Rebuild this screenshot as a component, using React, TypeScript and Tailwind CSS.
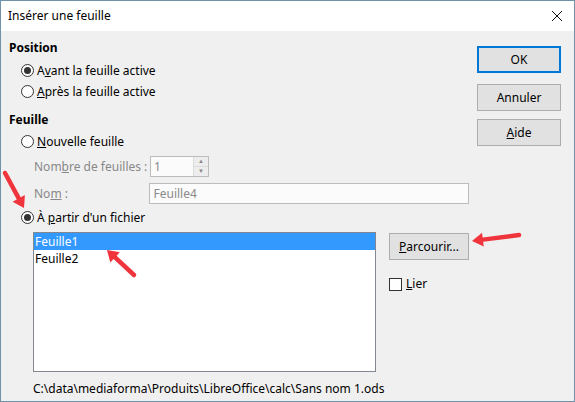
import React from "react"

const font = { fontFamily: '"Noto Sans", "Open Sans", sans-serif' }

const Radio = ({ checked, label, u, rest, disabled }: { checked?: boolean; label: string; u: string; rest: string; disabled?: boolean }) => (
    <div className="flex items-center h-[21px]">
        <span className="w-[13px] h-[13px] rounded-full border border-[#333] bg-white flex items-center justify-center">
            {checked && <span className="w-[7px] h-[7px] rounded-full bg-[#333]" />}
        </span>
        <span className={`ml-[3px] ${disabled ? "text-[#6d6d6d]" : "text-black"}`}>
            {label}<span className="underline">{u}</span>{rest}
        </span>
    </div>
)

const Btn = ({ children, primary, className = "" }: { children: React.ReactNode; primary?: boolean; className?: string }) => (
    <div className={`h-[27px] flex items-center justify-center bg-[#e1e1e1] border ${primary ? "border-[#0078d7] border-2" : "border-[#adadad]"} ${className}`}>
        {children}
    </div>
)

const Arrow = ({ x1, y1, x2, y2 }: { x1: number; y1: number; x2: number; y2: number }) => {
    const a = Math.atan2(y2 - y1, x2 - x1)
    const len = 11
    const w = 7
    const bx = x2 - Math.cos(a) * len
    const by = y2 - Math.sin(a) * len
    const px = -Math.sin(a) * w
    const py = Math.cos(a) * w
    return (
        <g>
            <line x1={x1} y1={y1} x2={bx} y2={by} stroke="#f0343c" strokeWidth={4.5} strokeLinecap="round" />
            <polygon points={`${x2},${y2} ${bx + px},${by + py} ${bx - px},${by - py}`} fill="#f0343c" />
        </g>
    )
}

export default function App() {
    return (
        <div className="w-[575px] h-[402px] relative text-[12px] text-black overflow-hidden" style={font}>
            <div className="w-full h-full border border-[#6f92ab] flex flex-col bg-[#f0f0f0]">
                {/* title bar */}
                <div className="h-[30px] bg-white flex items-center justify-between pl-[7px] pr-[11px] shrink-0">
                    <span className="text-[12px]">Insérer une feuille</span>
                    <svg width="12" height="12" viewBox="0 0 12 12">
                        <path d="M1 1 L11 11 M11 1 L1 11" stroke="#111" strokeWidth="1" />
                    </svg>
                </div>

                <div className="flex flex-1">
                    {/* left column */}
                    <div className="w-[468px] pl-[8px] pt-[8px] flex flex-col">
                        <div className="font-bold h-[18px] leading-[18px]">Position</div>
                        <div className="pl-[12px] pt-[3px]">
                            <Radio checked label="A" u="v" rest="ant la feuille active" />
                            <Radio label="" u="A" rest="près la feuille active" />
                        </div>
                        <div className="font-bold h-[18px] leading-[18px] mt-[9px]">Feuille</div>
                        <div className="pl-[12px] pt-[2px]">
                            <Radio label="" u="N" rest="ouvelle feuille" />
                        </div>
                        <div className="pl-[25px] mt-[4px] flex items-center h-[21px] text-[#888]">
                            <span className="w-[116px]">Nom<span className="underline">b</span>re de feuilles :</span>
                            <div className="w-[59px] h-[21px] border border-[#bcbcbc] bg-[#fbfbfb] flex">
                                <span className="flex-1 pl-[3px] leading-[19px] text-[#8a8a8a]">1</span>
                                <div className="w-[15px] flex flex-col border-l border-[#dcdcdc]">
                                    <div className="flex-1 flex items-center justify-center text-[6px] text-[#888] bg-[#ededed] border-b border-[#dcdcdc]">▲</div>
                                    <div className="flex-1 flex items-center justify-center text-[6px] text-[#888] bg-[#ededed]">▼</div>
                                </div>
                            </div>
                        </div>
                        <div className="pl-[25px] mt-[6px] flex items-center h-[21px] text-[#888]">
                            <span className="w-[116px]">No<span className="underline">m</span> :</span>
                            <div className="w-[321px] h-[21px] border border-[#bcbcbc] bg-[#fbfbfb] pl-[3px] leading-[19px] text-[#8a8a8a]">Feuille4</div>
                        </div>
                        <div className="pl-[12px] mt-[3px]">
                            <Radio checked label="À " u="p" rest="artir d'un fichier" />
                        </div>
                        <div className="flex mt-[4px] pl-[24px]">
                            <div className="w-[343px] h-[140px] border border-[#828790] bg-white">
                                <div className="h-[17px] bg-[#3399ff] text-white pl-[1px] leading-[17px]">Feuille1</div>
                                <div className="h-[17px] pl-[1px] leading-[17px]">Feuille2</div>
                            </div>
                            <div className="ml-[13px] pt-[1px]">
                                <Btn className="w-[80px]"><span><span className="underline">P</span>arcourir...</span></Btn>
                                <div className="flex items-center mt-[15px]">
                                    <span className="w-[13px] h-[13px] border border-[#333] bg-white" />
                                    <span className="ml-[4px]"><span className="underline">L</span>ier</span>
                                </div>
                            </div>
                        </div>
                        <div className="pl-[24px] mt-[8px] h-[18px] leading-[18px]">C:\data\mediaforma\Produits\LibreOffice\calc\Sans nom 1.ods</div>
                    </div>

                    {/* right column */}
                    <div className="pl-[8px] pt-[15px] flex flex-col">
                        <Btn primary className="w-[84px]">OK</Btn>
                        <Btn className="w-[84px] mt-[11px]">Annuler</Btn>
                        <Btn className="w-[84px] mt-[8px]"><span><span className="underline">A</span>ide</span></Btn>
                    </div>
                </div>
            </div>

            {/* annotation arrows */}
            <svg className="absolute inset-0 pointer-events-none" width="575" height="402">
                <Arrow x1={5} y1={173} x2={24} y2={208} />
                <Arrow x1={134} y1={275} x2={107} y2={250} />
                <Arrow x1={519} y1={235} x2={472} y2={241} />
            </svg>
        </div>
    )
}
